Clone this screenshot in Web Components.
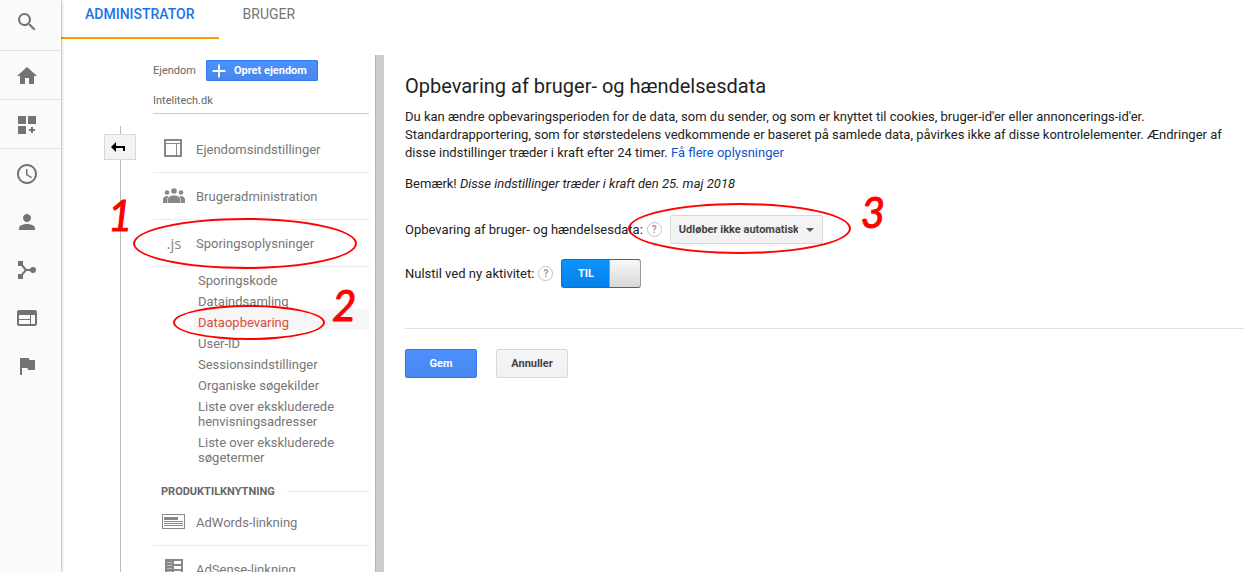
<!DOCTYPE html>
<html lang="da">
<head>
<meta charset="utf-8">
<title>Administrator – Opbevaring af data</title>
<style>
  html, body { margin: 0; height: 100%; }
  body { font: 13px/18px Roboto, "Liberation Sans", sans-serif; color: #222; background: #fff; overflow: hidden; }
</style>
</head>
<body>
<admin-app></admin-app>

<script>
const define = (name, html, setup) => {
  const template = document.createElement('template');
  template.innerHTML = html;
  customElements.define(name, class extends HTMLElement {
    constructor() {
      super();
      this.attachShadow({ mode: 'open' }).append(template.content.cloneNode(true));
    }
    connectedCallback() { if (setup) setup(this, this.shadowRoot); }
  });
};

const ICONS = {
  search: '<path d="M15.5 14h-.79l-.28-.27A6.47 6.47 0 0 0 16 9.5 6.5 6.5 0 1 0 9.5 16c1.61 0 3.09-.59 4.23-1.57l.27.28v.79l5 4.99L20.49 19l-4.99-5zm-6 0C7.01 14 5 11.99 5 9.5S7.01 5 9.5 5 14 7.01 14 9.5 11.99 14 9.5 14z"/>',
  home: '<path d="M10 20v-6h4v6h5v-8h3L12 3 2 12h3v8z"/>',
  dashboard: '<path d="M3 3h8v8H3zM13 3h8v8h-8zM3 13h8v8H3zM16 14h2v2h2v2h-2v2h-2v-2h-2v-2h2z"/>',
  clock: '<path d="M11.99 2C6.47 2 2 6.48 2 12s4.47 10 9.99 10C17.52 22 22 17.52 22 12S17.52 2 11.99 2zM12 20c-4.42 0-8-3.58-8-8s3.58-8 8-8 8 3.58 8 8-3.58 8-8 8zm.5-13H11v6l5.25 3.15.75-1.23-4.5-2.67z"/>',
  person: '<path d="M12 12c2.21 0 4-1.79 4-4s-1.79-4-4-4-4 1.79-4 4 1.790 4 4 4zm0 2c-2.670 0-8 1.340-8 4v2h16v-2c0-2.660-5.330-4-8-4z"/>',
  flow: '<path d="M3 3h5v5H3zM3 16h5v5H3z"/><circle cx="18" cy="12" r="3"/><path d="M6 6l5 6-5 6M11 12h7" fill="none" stroke="currentColor" stroke-width="2"/>',
  web: '<path d="M20 4H4c-1.1 0-2 .9-2 2v12c0 1.1.9 2 2 2h16c1.1 0 2-.9 2-2V6c0-1.1-.9-2-2-2zm-5 14H4v-4h11v4zm0-5H4V9h11v4zm5 5h-4V9h4v9z"/>',
  flag: '<path d="M14.4 6L14 4H5v17h2v-7h5.600l.4 2h7V6z"/>',
  layout: '<path d="M2 2h18v18H2zM4 4v2h14V4zM4 7v11h10V7zM15 7v11h3V7z" fill-rule="evenodd"/>',
  people: '<circle cx="12" cy="7" r="2.800"/><circle cx="5" cy="8.500" r="2.300"/><circle cx="19" cy="8.500" r="2.300"/><path d="M6 19v-4c0-2 2.500-3.500 6-3.500s6 1.500 6 3.500v4zM1 19v-3.500c0-2 2-3.500 4-3.500l1.500.3C5.800 13 5.500 14 5.500 15v4zM23 19v-3.500c0-2-2-3.500-4-3.500l-1.500.3c.7.7 1 1.700 1 2.700v4z"/>',
  adwords: '<path d="M0 4h23v15H0zM1 5v13h21V5z" fill-rule="evenodd"/><path d="M2 7h14v3H2zM2 11h19v1H2zM2 13h19v1H2zM2 15h19v1H2z"/>',
  adsense: '<path d="M3 2h18v18H3zM12 4v3h7V4zM12 9v3h7V9zM12 14v4h7v-4z" fill-rule="evenodd"/><path d="M5 5.500h5M5 8.500h5M5 11.500h5M5 14.500h5" stroke="#bbb"/>',
  back: '<path d="M4 12l5-5v4h9v5h-2v-3H9v4z"/>',
  plus: '<path d="M11 5h2v6h6v2h-6v6h-2v-6H5v-2h6z"/>'
};

define('ga-icon', `
  <style>
    :host { display: block; width: 24px; height: 24px; flex: none; }
    svg { display: block; width: 100%; height: 100%; fill: currentColor; }
  </style>
  <svg viewBox="0 0 24 24" aria-hidden="true"></svg>
`, (host, root) => { root.querySelector('svg').innerHTML = ICONS[host.getAttribute('name')] || ''; });

/* Red ring with a step number; placed over the element it points at. */
define('step-mark', `
  <style>
    :host { position: absolute; box-sizing: border-box; border: 2px solid #f00; border-radius: 50%; pointer-events: none; z-index: 2; }
    span { position: absolute; left: var(--num-x); top: var(--num-y); font: italic 400 42px/44px Lato, sans-serif; color: #f00; -webkit-text-stroke: 1px #f00; }
  </style>
  <span><slot></slot></span>
`);

define('rail-link', `
  <style>
    :host { display: block; }
    a { display: flex; justify-content: center; align-items: center; height: 48px; padding-right: 7px; color: #737373; }
    :host([divided]) a { box-sizing: border-box; height: 49px; padding-top: 2px; border-bottom: 1px solid #e0e0e0; }
    :host([first]) a { height: 51px; padding-top: 0; padding-bottom: 6px; }
  </style>
  <a href="#"><slot></slot></a>
`, (host, root) => root.querySelector('a').setAttribute('aria-label', host.getAttribute('label')));

define('side-rail', `
  <style>
    :host { display: block; width: 61px; flex: none; background: #fafafa; box-shadow: 0 0 3px rgba(0,0,0,.5); z-index: 1; }
    nav { display: flex; flex-direction: column; }
    .lower { padding-top: 1px; }
  </style>
  <nav>
    <rail-link divided first label="Søg"><ga-icon name="search"></ga-icon></rail-link>
    <rail-link divided label="Startside"><ga-icon name="home"></ga-icon></rail-link>
    <rail-link divided label="Tilpasning"><ga-icon name="dashboard"></ga-icon></rail-link>
    <div class="lower">
      <rail-link label="Realtid"><ga-icon name="clock"></ga-icon></rail-link>
      <rail-link label="Målgruppe"><ga-icon name="person"></ga-icon></rail-link>
      <rail-link label="Akkvisition"><ga-icon name="flow"></ga-icon></rail-link>
      <rail-link label="Adfærd"><ga-icon name="web"></ga-icon></rail-link>
      <rail-link label="Konverteringer"><ga-icon name="flag"></ga-icon></rail-link>
    </div>
  </nav>
`);

define('top-tabs', `
  <style>
    :host { display: block; }
    nav { display: flex; font-size: 14px; line-height: 28px; }
    a { box-sizing: border-box; height: 39px; padding: 0 24px 9px; color: #757575; text-decoration: none; border-bottom: 2px solid transparent; }
    a[aria-current] { color: #1a73e8; font-weight: 500; border-color: #f90; }
  </style>
  <nav><a href="#" aria-current="page">ADMINISTRATOR</a><a href="#">BRUGER</a></nav>
`);

define('nav-item', `
  <style>
    :host { display: block; position: relative; border-bottom: 1px solid #ebebeb; }
    a { display: flex; align-items: center; gap: 10px; height: 46px; padding-left: 9px; color: #777; text-decoration: none; }
    .icon { width: 24px; flex: none; color: #888; font: 400 15px/20px "Open Sans", sans-serif; text-align: center; }
    .label { padding-top: 2px; }
  </style>
  <a href="#"><span class="icon"><slot name="icon"></slot></span><span class="label"><slot></slot></span></a>
  <slot name="mark"></slot>
`);

define('sub-item', `
  <style>
    :host { display: block; position: relative; margin-left: 41px; }
    a { display: block; padding: 6px 24px 0 4px; line-height: 15px; color: #777; text-decoration: none; }
    :host([active]) a { color: #dd4b39; background: #f6f6f6; }
  </style>
  <a href="#"><slot></slot></a>
  <slot name="mark"></slot>
`);

define('property-nav', `
  <style>
    :host { display: grid; grid-template-columns: 92px 216px; width: 314px; flex: none; overflow: hidden; }
    .tree { display: flex; flex-direction: column; align-items: center; padding-top: 87px; margin-left: 26px; }
    .tree::before { content: ""; height: 8px; border-left: 1px solid #bbb; }
    .tree::after { content: ""; flex: 1; border-left: 1px solid #bbb; }
    .back { box-sizing: border-box; width: 32px; height: 26px; padding: 0 2px; border: 1px solid #d8d8d8; background: #f3f3f3; color: #000; }
    .back ga-icon { height: 24px; }
    .col { min-width: 0; }
    .head { display: flex; align-items: center; gap: 10px; height: 21px; padding-top: 21px; font-size: 11px; color: #666; }
    .new { display: flex; align-items: center; gap: 4px; height: 21px; padding: 0 10px 0 1px; border: 1px solid #3079ed; border-radius: 1px; background: linear-gradient(#4d90fe, #4787ed); color: #fff; font: 700 11px/19px Roboto, sans-serif; }
    .new ga-icon { width: 22px; height: 22px; }
    .prop { padding: 11px 0 3px; border-bottom: 1px solid #ccc; font-size: 11px; color: #666; }
    .list { padding-top: 12px; }
    h2 { display: flex; align-items: center; gap: 12px; margin: 0; padding: 19px 0 0 8px; font-size: 11px; line-height: 15px; color: #666; }
    h2::after { content: ""; flex: 1; border-top: 1px solid #ebebeb; }
    .m1 { left: -20px; top: -2px; width: 224px; height: 51px; --num-x: -27px; --num-y: -27px; }
    .m2 { left: -21px; top: -4px; width: 152px; height: 35px; --num-x: 157px; --num-y: -24px; }
  </style>
  <div class="tree"><button class="back" aria-label="Tilbage"><ga-icon name="back"></ga-icon></button></div>
  <div class="col">
    <div class="head"><span>Ejendom</span><button class="new"><ga-icon name="plus"></ga-icon>Opret ejendom</button></div>
    <div class="prop">Intelitech.dk</div>
    <nav class="list">
      <nav-item><ga-icon slot="icon" name="layout"></ga-icon>Ejendomsindstillinger</nav-item>
      <nav-item><ga-icon slot="icon" name="people"></ga-icon>Brugeradministration</nav-item>
      <nav-item><span slot="icon">.js</span>Sporingsoplysninger<step-mark slot="mark" class="m1">1</step-mark></nav-item>
      <sub-item>Sporingskode</sub-item>
      <sub-item>Dataindsamling</sub-item>
      <sub-item active>Dataopbevaring<step-mark slot="mark" class="m2">2</step-mark></sub-item>
      <sub-item>User-ID</sub-item>
      <sub-item>Sessionsindstillinger</sub-item>
      <sub-item>Organiske søgekilder</sub-item>
      <sub-item>Liste over ekskluderede henvisningsadresser</sub-item>
      <sub-item>Liste over ekskluderede søgetermer</sub-item>
      <h2>PRODUKTILKNYTNING</h2>
      <nav-item><ga-icon slot="icon" name="adwords"></ga-icon>AdWords-linkning</nav-item>
      <nav-item><ga-icon slot="icon" name="adsense"></ga-icon>AdSense-linkning</nav-item>
    </nav>
  </div>
`);

define('help-tip', `
  <style>
    :host { display: block; flex: none; }
    button { display: block; box-sizing: border-box; width: 15px; height: 15px; padding: 0; border: 1px solid #c4c4c4; border-radius: 50%; background: #fff; color: #999; font: 700 10px/13px Roboto, sans-serif; }
  </style>
  <button type="button" aria-label="Hjælp">?</button>
`);

define('ga-button', `
  <style>
    :host { display: block; }
    button { box-sizing: border-box; width: 72px; height: 29px; padding: 0; border: 1px solid #d8d8d8; border-radius: 2px; background: linear-gradient(#f5f5f5, #f1f1f1); color: #444; font: 700 11px/27px Roboto, sans-serif; }
    :host([primary]) button { border-color: #3079ed; background: linear-gradient(#4d90fe, #4787ed); color: #fff; }
  </style>
  <button type="button"><slot></slot></button>
`);

define('retention-form', `
  <style>
    :host { display: block; flex: 1; min-width: 0; padding: 35px 0 0 21px; }
    h1 { margin: 0; font-size: 20px; line-height: 24px; font-weight: 400; }
    p { margin: 10px 12px 0 0; }
    p.note { margin-top: 13px; }
    a { color: #15c; text-decoration: none; }
    .row { display: flex; align-items: center; height: 29px; margin-top: 15px; }
    .note + .row { margin-top: 22px; }
    help-tip { margin: 0 8px 0 4px; }
    .pick { position: relative; }
    select { display: block; appearance: none; box-sizing: border-box; height: 29px; width: 153px; padding: 0 24px 0 8px; border: 1px solid #d8d8d8; border-radius: 2px; background: linear-gradient(#f5f5f5, #f1f1f1); color: #444; font: 700 11px/27px Roboto, sans-serif; }
    .pick::after { content: ""; position: absolute; right: 9px; top: 13px; border: 4px solid transparent; border-top-color: #555; border-bottom: 0; pointer-events: none; }
    .m3 { left: -42px; top: -12px; width: 223px; height: 51px; --num-x: 231px; --num-y: -15px; }
    .switch { display: grid; }
    .switch > * { grid-area: 1 / 1; }
    .switch input { appearance: none; box-sizing: border-box; display: flex; justify-content: flex-end; width: 80px; height: 29px; margin: 0; border: 1px solid #0c74c9; border-right-color: #999; border-radius: 3px; background: linear-gradient(#0c93ff, #0580ea); overflow: hidden; }
    .switch input::after { content: ""; box-sizing: border-box; width: 31px; height: 29px; margin: -1px 0; border: 1px solid #999; border-right: 0; background: linear-gradient(#f8f8f8, #d8d8d8); }
    .switch span { width: 49px; line-height: 29px; text-align: center; color: #fff; font-size: 11px; font-weight: 700; pointer-events: none; }
    hr { margin: 40px 0 20px; border: 0; border-top: 1px solid #e0e0e0; }
    .actions { display: flex; gap: 19px; }
  </style>
  <h1>Opbevaring af bruger- og hændelsesdata</h1>
  <p>Du kan ændre opbevaringsperioden for de data, som du sender, og som er knyttet til cookies, bruger-id'er eller annoncerings-id'er. Standardrapportering, som for størstedelens vedkommende er baseret på samlede data, påvirkes ikke af disse kontrolelementer. Ændringer af disse indstillinger træder i kraft efter 24 timer. <a href="#">Få flere oplysninger</a></p>
  <p class="note">Bemærk! <i>Disse indstillinger træder i kraft den 25. maj 2018</i></p>
  <div class="row">
    <label for="retention">Opbevaring af bruger- og hændelsesdata:</label><help-tip></help-tip>
    <div class="pick">
      <select id="retention"><option>Udløber ikke automatisk</option></select>
      <step-mark class="m3">3</step-mark>
    </div>
  </div>
  <div class="row">
    <label for="reset">Nulstil ved ny aktivitet:</label><help-tip></help-tip>
    <div class="switch"><input type="checkbox" role="switch" id="reset" checked><span>TIL</span></div>
  </div>
  <hr>
  <div class="actions"><ga-button primary>Gem</ga-button><ga-button>Annuller</ga-button></div>
`);

define('admin-app', `
  <style>
    :host { display: flex; height: 100vh; overflow: hidden; }
    .page { display: flex; flex-direction: column; flex: 1; min-width: 0; }
    .body { display: flex; flex: 1; min-height: 0; }
    .divider { box-sizing: border-box; width: 9px; flex: none; margin-top: 16px; background: #ccc; border-left: 1px solid #b5b5b5; }
  </style>
  <side-rail></side-rail>
  <div class="page">
    <top-tabs></top-tabs>
    <div class="body">
      <property-nav></property-nav>
      <div class="divider"></div>
      <retention-form></retention-form>
    </div>
  </div>
`);
</script>
</body>
</html>
